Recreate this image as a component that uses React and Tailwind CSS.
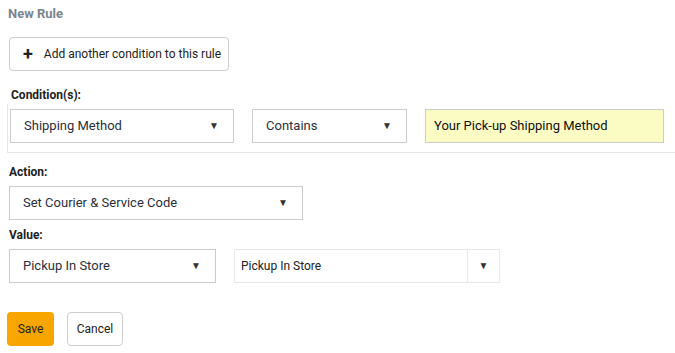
export default function App() {
  const Caret = () => <span className="text-[10px] leading-none text-[#333]">▼</span>;

  return (
    <div className="h-[353px] w-[675px] overflow-hidden bg-white font-['Roboto',sans-serif] text-[13px] text-[#2b2f3a]">
      <div className="px-2 pt-[4px]">
        <h2 className="text-[13px] font-bold text-[#7b858e]">New Rule</h2>
        <button className="mt-[13px] ml-px flex h-[34px] w-[220px] items-center rounded-[4px] border border-[#ccc] bg-white pl-[13px] text-[12px] text-[#222]">
          <span className="mr-[11px] text-[18px] font-bold leading-none">+</span>
          Add another condition to this rule
        </button>
      </div>

      <div className="mt-[15px] pl-[11px] text-[12px] font-bold text-[#222]">Condition(s):</div>
      <div className="ml-[7px] flex gap-[18px] border-b border-l border-[#e6e6e6] pb-[9px] pl-[2px] pt-[5px]">
        <div className="flex h-[34px] w-[224px] items-center justify-between border border-[#ccc] pl-[13px] pr-[14px]">
          <span>Shipping Method</span>
          <Caret />
        </div>
        <div className="flex h-[34px] w-[155px] items-center justify-between border border-[#ccc] pl-[13px] pr-[14px]">
          <span>Contains</span>
          <Caret />
        </div>
        <div className="flex h-[34px] w-[239px] items-center border border-[#ccc] bg-[#fafcc4] pl-[8px] text-[#111]">
          Your Pick-up Shipping Method
        </div>
      </div>

      <div className="mt-[10px] pl-[9px] text-[12px] font-bold text-[#222]">Action:</div>
      <div className="mt-[5px] pl-[9px]">
        <div className="flex h-[34px] w-[294px] items-center justify-between border border-[#ccc] pl-[13px] pr-[14px]">
          <span>Set Courier &amp; Service Code</span>
          <Caret />
        </div>
      </div>

      <div className="mt-[6px] pl-[9px] text-[12px] font-bold text-[#222]">Value:</div>
      <div className="mt-[5px] flex items-center gap-[18px] pl-[9px]">
        <div className="flex h-[34px] w-[207px] items-center justify-between border border-[#ccc] pl-[13px] pr-[14px]">
          <span>Pickup In Store</span>
          <Caret />
        </div>
        <div className="flex h-[34px] w-[266px] items-stretch border border-[#e8e8e8]">
          <div className="flex flex-1 items-center pl-[6px] text-[12px] text-[#222]">Pickup In Store</div>
          <div className="flex w-[32px] items-center justify-center border-l border-[#e8e8e8]">
            <Caret />
          </div>
        </div>
      </div>

      <div className="mt-[29px] flex gap-[13px] pl-[7px]">
        <button className="h-[34px] w-[47px] rounded-[4px] bg-[#f8a500] text-[12px] text-[#222]">Save</button>
        <button className="h-[34px] w-[56px] rounded-[4px] border border-[#ccc] bg-white text-[12px] text-[#222]">Cancel</button>
      </div>
    </div>
  );
}
